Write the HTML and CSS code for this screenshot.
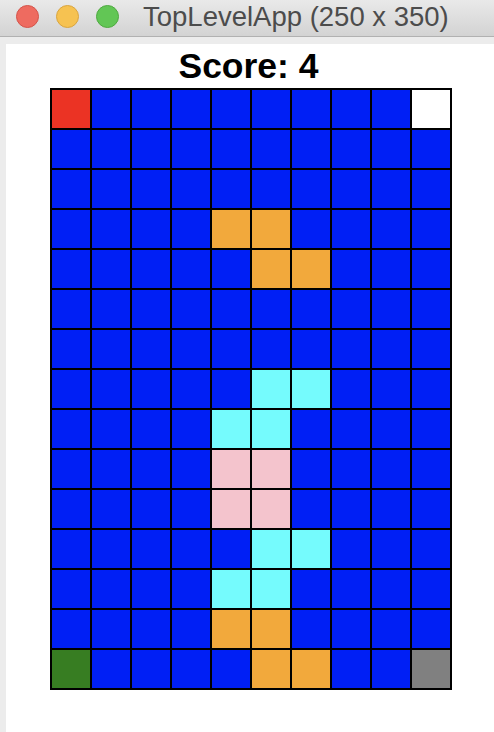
FILE: index.html
```html
<!DOCTYPE html>
<html lang="en">
<head>
    <meta charset="UTF-8">
    <meta name="viewport" content="width=device-width, initial-scale=1.0">
    <title>TopLevelApp (250 x 350)</title>
    <link rel="stylesheet" href="styles.css">
</head>
<body>
    <div class="window">
        <div class="title-bar">
            <div class="lights">
                <span class="light close"></span>
                <span class="light minimize"></span>
                <span class="light zoom"></span>
            </div>
            <div class="title">TopLevelApp (250 x 350)</div>
        </div>
        <div class="frame">
            <div class="content">
                <h1 class="score">Score: 4</h1>
                <div class="board" id="board"></div>
            </div>
        </div>
    </div>

    <script>
        // one letter per cell: b blue, r red, w white, o orange, c cyan, p pink, g green, x gray
        const rows = [
            'rbbbbbbbbw',
            'bbbbbbbbbb',
            'bbbbbbbbbb',
            'bbbboobbbb',
            'bbbbboobbb',
            'bbbbbbbbbb',
            'bbbbbbbbbb',
            'bbbbbccbbb',
            'bbbbccbbbb',
            'bbbbppbbbb',
            'bbbbppbbbb',
            'bbbbbccbbb',
            'bbbbccbbbb',
            'bbbboobbbb',
            'gbbbboobbx'
        ];
        const names = { b: 'blue', r: 'red', w: 'white', o: 'orange', c: 'cyan', p: 'pink', g: 'green', x: 'gray' };

        const board = document.getElementById('board');
        rows.forEach(row => {
            for (const ch of row) {
                const cell = document.createElement('div');
                cell.className = 'cell ' + names[ch];
                board.appendChild(cell);
            }
        });
    </script>
</body>
</html>
```

FILE: styles.css
```css
html, body {
    height: 100%;
}
body {
    margin: 0;
    font-family: "Liberation Sans", Arial, sans-serif;
    background-color: #ececec;
    overflow: hidden;
}
.window {
    display: flex;
    flex-direction: column;
    height: 100%;
}
.title-bar {
    display: flex;
    align-items: center;
    height: 36px;
    background: linear-gradient(#e9e9e9, #d3d3d3);
    border-bottom: 1px solid #b1b1b1;
    flex-shrink: 0;
}
.lights {
    display: flex;
    gap: 17px;
    margin-left: 16px;
    margin-top: -3px;
}
.light {
    width: 21px;
    height: 21px;
    border-radius: 50%;
    border: 1px solid;
}
.light.close {
    background-color: #ee6b60;
    border-color: #d4544a;
}
.light.minimize {
    background-color: #f6c251;
    border-color: #d9a540;
}
.light.zoom {
    background-color: #62c655;
    border-color: #4fa940;
}
.title {
    margin-left: 24px;
    margin-top: -3px;
    font-size: 27.5px;
    color: #4c4c4c;
    white-space: nowrap;
}
.frame {
    flex: 1;
    padding: 7px 0 0 6px;
}
.content {
    height: 100%;
    background-color: #fff;
    display: flex;
    flex-direction: column;
    align-items: center;
    box-sizing: border-box;
}
.score {
    margin: 5px 0 5px -3px;
    font-size: 35.5px;
    line-height: 34px;
    font-weight: bold;
    color: #000;
}
.board {
    display: grid;
    grid-template-columns: repeat(10, 38px);
    grid-auto-rows: 38px;
    gap: 2px;
    padding: 2px;
    margin-left: 2px;
    background-color: #000;
}
.cell.blue { background-color: #001ff5; }
.cell.red { background-color: #eb3324; }
.cell.white { background-color: #fff; }
.cell.orange { background-color: #f2a93c; }
.cell.cyan { background-color: #75fbfd; }
.cell.pink { background-color: #f4c4cd; }
.cell.green { background-color: #377d22; }
.cell.gray { background-color: #808080; }
```
